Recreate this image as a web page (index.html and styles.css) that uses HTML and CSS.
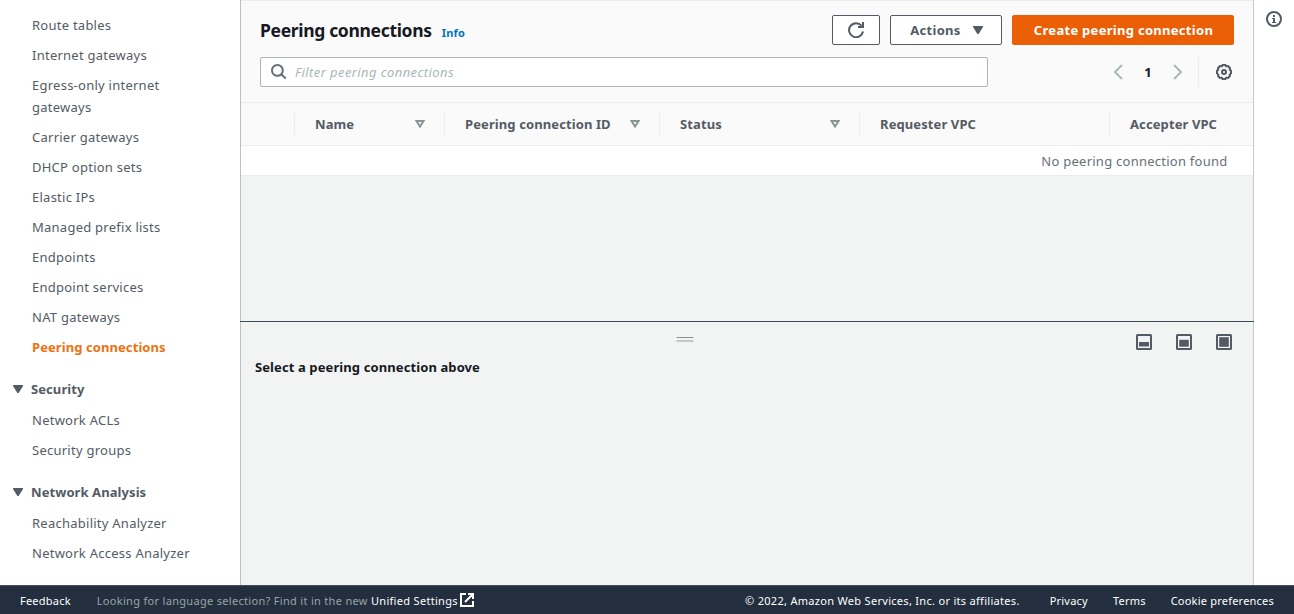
FILE: index.html
```html
<!DOCTYPE html>
<html lang="en">
<head>
<meta charset="utf-8">
<title>Peering connections</title>
<link rel="stylesheet" href="styles.css">
</head>
<body>
<div class="workspace">
  <nav class="sidebar">
    <ul class="nav-list">
      <li>Route tables</li>
      <li>Internet gateways</li>
      <li>Egress-only internet gateways</li>
      <li>Carrier gateways</li>
      <li>DHCP option sets</li>
      <li>Elastic IPs</li>
      <li>Managed prefix lists</li>
      <li>Endpoints</li>
      <li>Endpoint services</li>
      <li>NAT gateways</li>
      <li class="active">Peering connections</li>
    </ul>
    <h2 class="nav-heading"><svg width="10" height="8" viewBox="0 0 10 8"><path d="M0 0h10v1L5.6 8H4.4L0 1z" fill="currentColor"/></svg>Security</h2>
    <ul class="nav-list">
      <li>Network ACLs</li>
      <li>Security groups</li>
    </ul>
    <h2 class="nav-heading"><svg width="10" height="8" viewBox="0 0 10 8"><path d="M0 0h10v1L5.6 8H4.4L0 1z" fill="currentColor"/></svg>Network Analysis</h2>
    <ul class="nav-list">
      <li>Reachability Analyzer</li>
      <li>Network Access Analyzer</li>
    </ul>
  </nav>
  <main class="content">
    <section class="list-pane">
      <header class="list-header">
        <div class="title-row">
          <h1 class="title">Peering connections</h1>
          <a class="info">Info</a>
          <div class="buttons">
            <button class="btn btn-icon" aria-label="Refresh"><svg width="16" height="16" viewBox="0 0 16 16" fill="none" stroke="currentColor" stroke-width="2"><path d="M15 9.500A7 7 0 1 1 13.500 3.700"/><path d="M15 0v5h-5" /></svg></button>
            <button class="btn btn-actions"><span>Actions</span><svg width="10" height="8" viewBox="0 0 10 8"><path d="M0 0h10v1L5.6 8H4.4L0 1z" fill="currentColor"/></svg></button>
            <button class="btn btn-primary"><span>Create peering connection</span></button>
          </div>
        </div>
        <div class="filter-row">
          <div class="search">
            <svg width="16" height="16" viewBox="0 0 16 16" fill="none" stroke="currentColor" stroke-width="2"><circle cx="6.4" cy="6.400" r="5.400"/><path d="M10.200 10.200l4.600 4.300"/></svg>
            <span>Filter peering connections</span>
          </div>
          <div class="pager">
            <svg width="10" height="16" viewBox="0 0 10 16" fill="none" stroke="currentColor" stroke-width="2"><path d="M9 1L2 8l7 7"/></svg>
            <b>1</b>
            <svg width="10" height="16" viewBox="0 0 10 16" fill="none" stroke="currentColor" stroke-width="2"><path d="M1 1l7 7-7 7"/></svg>
          </div>
          <div class="settings">
            <svg width="16" height="16" viewBox="0 0 16 16" fill="none" stroke="currentColor" stroke-width="2" stroke-linejoin="round"><path d="M6.500 1h3l.8 1.400 1.700-.4 2 2-.4 1.700 1.400.8v3l-1.400.8.4 1.700-2 2-1.700-.4-.8 1.400h-3l-.8-1.400-1.700.4-2-2 .4-1.700L1 9.500v-3l1.400-.8L2 4l2-2 1.700.4z"/><circle cx="8" cy="8" r="2"/></svg>
          </div>
        </div>
      </header>
      <div class="columns">
        <div class="col"></div>
        <div class="col"><span>Name</span><svg class="sort" width="10" height="8" viewBox="0 0 10 8"><path d="M1.500 1h7L5 6.500z"/></svg></div>
        <div class="col"><span>Peering connection ID</span><svg class="sort" width="10" height="8" viewBox="0 0 10 8"><path d="M1.500 1h7L5 6.500z"/></svg></div>
        <div class="col"><span>Status</span><svg class="sort" width="10" height="8" viewBox="0 0 10 8"><path d="M1.500 1h7L5 6.500z"/></svg></div>
        <div class="col"><span>Requester VPC</span></div>
        <div class="col"><span>Accepter VPC</span></div>
      </div>
      <div class="empty"><span>No peering connection found</span></div>
    </section>
    <section class="detail-pane">
      <div class="split-bar">
        <svg class="grip" width="18" height="6" viewBox="0 0 18 6"><path d="M.5 0h17v1H.5z" fill="#879596"/><path d="M.5 3h17v2H.5z" fill="#c3c7c7"/></svg>
        <div class="sizes">
          <svg width="16" height="16" viewBox="0 0 16 16"><rect x="1" y="1" width="14" height="14" rx=".5"/><path d="M3 8h10v4.500H3z"/></svg>
          <svg width="16" height="16" viewBox="0 0 16 16"><rect x="1" y="1" width="14" height="14" rx=".5"/><path d="M3.200 5.800h9.600v6.900H3.200z"/></svg>
          <svg width="16" height="16" viewBox="0 0 16 16"><rect x="1" y="1" width="14" height="14" rx=".5"/><path d="M3.200 3.200h9.600v9.600H3.200z"/></svg>
        </div>
      </div>
      <h3 class="detail-title"><span>Select a peering connection above</span></h3>
    </section>
  </main>
  <aside class="tools">
    <svg width="16" height="16" viewBox="0 0 16 16"><circle cx="8" cy="8" r="7" fill="none" stroke="currentColor" stroke-width="2"/><path d="M7 4h2v2H7zM6 7h3v4h1v1H6v-1h1V8H6z" fill="currentColor"/></svg>
  </aside>
</div>
<footer class="footer">
  <span class="feedback">Feedback</span>
  <span class="language">Looking for language selection? Find it in the new <a>Unified Settings</a></span>
  <svg class="external" width="14" height="14" viewBox="0 0 14 14" fill="none" stroke="#fff" stroke-width="2"><path d="M6 1H1v12h12V8M8 1h5v5M13 1L5 9"/></svg>
  <span class="copyright">© 2022, Amazon Web Services, Inc. or its affiliates.</span>
  <span class="privacy">Privacy</span>
  <span class="terms">Terms</span>
  <span class="cookies">Cookie preferences</span>
</footer>
</body>
</html>
```
FILE: styles.css
```css
* { box-sizing: border-box; }
body {
  margin: 0;
  height: 614px;
  display: flex;
  flex-direction: column;
  overflow: hidden;
  background: #fff;
  color: #545b64;
  font: 13px/22px "Noto Sans", sans-serif;
  letter-spacing: .25px;
}
svg { display: block; flex: none; }
.workspace { display: flex; height: 585px; }
.sidebar { width: 240px; padding-top: 10px; }
.nav-list { list-style: none; margin: 0; padding: 0 40px 0 32px; }
.nav-list li { padding: 4px 0; }
.nav-list .active { color: #ec7211; font-weight: 700; letter-spacing: .08px; }
.nav-heading {
  display: flex;
  align-items: center;
  gap: 8px;
  margin: 0;
  padding: 16px 0 5px 13px;
  font-size: 13px;
  letter-spacing: .08px;
}
.content {
  width: 1014px;
  display: flex;
  flex-direction: column;
  border-left: 1px solid #b9c1c4;
  border-right: 1px solid #c6cccd;
  background: #f2f3f3;
}
.list-pane { height: 321px; border-top: 1px solid #eaeded; }
.list-header {
  height: 102px;
  padding: 14px 19px 0;
  background: #fafafa;
  border-bottom: 1px solid #eaeded;
}
.title-row { display: flex; height: 30px; align-items: center; }
.title { margin: 0; font-size: 17.5px; line-height: 30px; color: #16191f; letter-spacing: -.33px; }
.info { margin: 6px 0 0 10px; font-size: 11px; font-weight: 700; color: #0073bb; }
.buttons { display: flex; gap: 10px; margin-left: auto; }
.btn {
  height: 30px;
  display: flex;
  align-items: center;
  justify-content: center;
  border: 1px solid #545b64;
  border-radius: 2px;
  padding: 0;
  background: #fff;
  color: #545b64;
  font: 700 13px/22px "Noto Sans", sans-serif;
  letter-spacing: .29px;
}
.btn-icon { width: 48px; }
.btn-actions { width: 112px; gap: 12px; padding-left: 1px; }
.btn-primary { width: 222px; padding-left: 1px; background: #eb5f07; border-color: #eb5f07; color: #fff; }
.filter-row { display: flex; align-items: center; height: 30px; margin-top: 12px; }
.search {
  width: 728px;
  height: 30px;
  display: flex;
  align-items: center;
  gap: 8px;
  padding-left: 10px;
  border: 1px solid #aab7b8;
  border-radius: 2px;
  background: #fff;
  color: #687078;
}
.search span { font-style: italic; color: #aab7b8; letter-spacing: .4px; }
.pager { display: flex; align-items: center; gap: 20px; margin-left: 125px; color: #aab7b8; }
.pager b { color: #16191f; width: 10px; text-align: center; }
.settings {
  height: 30px;
  display: flex;
  align-items: center;
  margin-left: auto;
  padding: 0 2px 0 17px;
  border-left: 1px solid #eaeded;
}
.columns {
  display: grid;
  grid-template-columns: 53px 150px 215px 200px 250px 1fr;
  align-items: center;
  height: 43px;
  background: #fafafa;
  border-bottom: 1px solid #eaeded;
  font-weight: 700;
  letter-spacing: .1px;
}
.col { display: flex; align-items: center; justify-content: space-between; height: 22px; padding: 0 19px 0 20px; border-left: 1px solid #eaeded; white-space: nowrap; }
.col:first-child { border-left: 0; }
.sort { fill: none; stroke: #879596; stroke-width: 2; }
.empty {
  height: 30px;
  padding: 4px 25.500px 0 0;
  text-align: right;
  background: #fff;
  border-bottom: 1px solid #eaeded;
  color: #687078;
}
.detail-pane { flex: 1; margin: 0 -1px; border-top: 1px solid #3f4b53; }
.split-bar { display: flex; height: 34px; align-items: flex-start; padding: 12px 22px 0 436px; }
.grip { margin-top: 3px; }
.sizes { display: flex; gap: 24px; margin-left: auto; }
.sizes svg { fill: #545b64; }
.sizes rect { fill: none; stroke: #545b64; stroke-width: 2; }
.detail-title { margin: 0 0 0 15px; font-size: 13px; color: #16191f; letter-spacing: .1px; }
.tools { width: 40px; padding: 11px 0 0 12px; }
.footer {
  height: 29px;
  display: flex;
  align-items: center;
  padding: 2px 20px 0;
  background: #232f3e;
  border-top: 1px solid #45505c;
  color: #fff;
  font-size: 11px;
  letter-spacing: .22px;
  white-space: nowrap;
}
.language { margin-left: 26px; color: #95a5a6; letter-spacing: .31px; }
.language a { color: #fff; }
.external { margin: -2px 0 0 2px; }
.copyright { margin-left: auto; letter-spacing: .3px; }
.privacy { margin-left: 30px; }
.terms { margin-left: 25px; }
.cookies { margin-left: 25px; }
```
